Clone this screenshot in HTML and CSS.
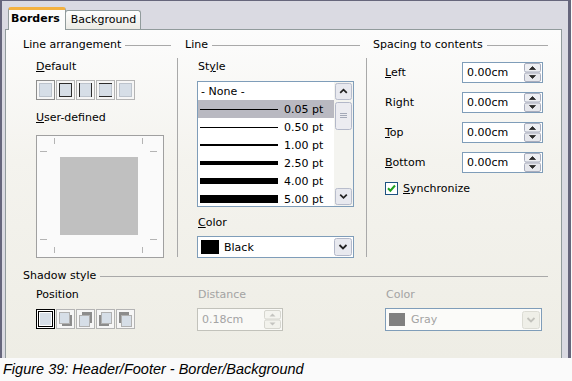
FILE: index.html
```html
<!DOCTYPE html>
<html lang="en">
<head>
  <meta charset="UTF-8">
  <title>Header/Footer - Border/Background</title>
  <link rel="stylesheet" href="styles.css">
</head>
<body>
  <svg class="defs" width="0" height="0">
    <symbol id="spin" viewBox="0 0 17 19">
      <rect x=".5" y=".5" width="16" height="8.5" rx="1.5" fill="#eeeff3" stroke="#a9adbd"/>
      <rect x=".5" y="10" width="16" height="8.5" rx="1.5" fill="#e6e7ec" stroke="#a9adbd"/>
      <path d="M5.5 6.5l3-3 3 3z" fill="#2a2a2a" stroke="#2a2a2a" stroke-width=".8"/>
      <path d="M5.5 12.5l3 3 3-3z" fill="#2a2a2a" stroke="#2a2a2a" stroke-width=".8"/>
    </symbol>
    <symbol id="spin-off" viewBox="0 0 17 19">
      <rect x=".5" y=".5" width="16" height="8.5" rx="1.5" fill="#f4f4ef" stroke="#d6d6cf"/>
      <rect x=".5" y="10" width="16" height="8.5" rx="1.5" fill="#f2f2ec" stroke="#d6d6cf"/>
      <path d="M5.5 6.5l3-3 3 3z" fill="#c4c4c0"/>
      <path d="M5.5 12.5l3 3 3-3z" fill="#c4c4c0"/>
    </symbol>
    <symbol id="btn-down" viewBox="0 0 18 18">
      <rect x=".5" y=".5" width="17" height="17" rx="2" fill="#e8e9ef" stroke="#b3b8c9"/>
      <path d="M5.5 7l3.5 3.5 3.5-3.5" fill="none" stroke="#222" stroke-width="1.8"/>
    </symbol>
    <symbol id="btn-up" viewBox="0 0 18 18">
      <rect x=".5" y=".5" width="17" height="17" rx="2" fill="#e8e9ef" stroke="#b3b8c9"/>
      <path d="M5.5 10.5l3.5-3.5 3.5 3.5" fill="none" stroke="#222" stroke-width="1.8"/>
    </symbol>
    <symbol id="btn-off" viewBox="0 0 18 18">
      <rect x=".5" y=".5" width="17" height="17" rx="2" fill="#efefe8" stroke="#dcdcd4"/>
      <path d="M5.5 7l3.5 3.5 3.5-3.5" fill="none" stroke="#c2c2bc" stroke-width="1.8"/>
    </symbol>
  </svg>

  <div class="window">
    <div class="tabs">
      <div class="tab active">Borders</div>
      <div class="tab">Background</div>
    </div>

    <div class="panel">
      <div class="grid">
        <section>
          <div class="heading"><span>Line arrangement</span><i></i></div>
          <div class="body-left">
            <div class="label first"><u>D</u>efault</div>
            <div class="icons">
              <svg width="19" height="20" viewBox="0 0 19 20"><rect x=".5" y=".5" width="18" height="19" fill="#f6f6f6" stroke="#222" stroke-dasharray="1 1"/><rect x="3.5" y="3.5" width="12" height="13" fill="#d6dee7" stroke="#bcc3cc"/></svg>
              <svg width="19" height="20" viewBox="0 0 19 20"><rect x=".5" y=".5" width="18" height="19" fill="#f6f6f6" stroke="#b4b4b4"/><rect x="3.5" y="3.5" width="12" height="13" fill="#d6dee7" stroke="#2c2c2c"/></svg>
              <svg width="19" height="20" viewBox="0 0 19 20"><rect x=".5" y=".5" width="18" height="19" fill="#f6f6f6" stroke="#b4b4b4"/><rect x="3.5" y="3.5" width="12" height="13" fill="#d6dee7" stroke="#bcc3cc"/><path d="M3.5 3v14M15.5 3v14" stroke="#2c2c2c"/></svg>
              <svg width="19" height="20" viewBox="0 0 19 20"><rect x=".5" y=".5" width="18" height="19" fill="#f6f6f6" stroke="#b4b4b4"/><rect x="3.5" y="3.5" width="12" height="13" fill="#d6dee7" stroke="#bcc3cc"/><path d="M3 3.5h13M3 16.5h13" stroke="#2c2c2c"/></svg>
              <svg width="19" height="20" viewBox="0 0 19 20"><rect x=".5" y=".5" width="18" height="19" fill="#f6f6f6" stroke="#b4b4b4"/><rect x="3.5" y="3.5" width="12" height="13" fill="#d6dee7" stroke="#bcc3cc"/></svg>
            </div>
            <div class="label user"><u>U</u>ser-defined</div>
            <svg class="preview" width="128" height="123" viewBox="0 0 128 123">
              <rect x=".5" y=".5" width="127" height="122" fill="#fafafa" stroke="#a0a0a0"/>
              <rect x="24" y="22" width="78" height="78" fill="#c0c0c0"/>
              <path d="M18.5 3v6M106.5 3v6M18.5 112v6M106.5 112v6M4 16.5h7M114 16.5h7M4 104.5h7M114 104.5h7" stroke="#b4b4b4"/>
            </svg>
          </div>
        </section>

        <div class="vsep"></div>

        <section>
          <div class="heading"><span>Line</span><i></i></div>
          <div class="label first indent">St<u>y</u>le</div>
          <div class="listbox">
            <div class="items">
              <div class="item none">- None -</div>
              <div class="item sel"><b class="sample w1"></b>0.05 pt</div>
              <div class="item"><b class="sample w1"></b>0.50 pt</div>
              <div class="item"><b class="sample w2"></b>1.00 pt</div>
              <div class="item"><b class="sample w4"></b>2.50 pt</div>
              <div class="item"><b class="sample w6"></b>4.00 pt</div>
              <div class="item"><b class="sample w8"></b>5.00 pt</div>
            </div>
            <div class="scrollbar">
              <svg width="17" height="17"><use href="#btn-up"/></svg>
              <svg class="thumb" width="17" height="28" viewBox="0 0 17 28"><rect x=".5" y=".5" width="16" height="27" rx="2" fill="#ececf1" stroke="#b3b8c9"/><path d="M5 11.5h7M5 13.5h7M5 15.5h7" stroke="#a4a9b8"/></svg>
              <svg class="down" width="17" height="17"><use href="#btn-down"/></svg>
            </div>
          </div>
          <div class="label color-label indent"><u>C</u>olor</div>
          <div class="dropdown">
            <span class="swatch"></span>Black
            <svg class="btn" width="18" height="18"><use href="#btn-down"/></svg>
          </div>
        </section>

        <div class="vsep"></div>

        <section>
          <div class="heading"><span>Spacing to contents</span><i></i></div>
          <div class="body-right">
            <div class="row first"><span class="name"><u>L</u>eft</span><div class="spin"><span>0.00cm</span><svg width="17" height="19"><use href="#spin"/></svg></div></div>
            <div class="row"><span class="name">Right</span><div class="spin"><span>0.00cm</span><svg width="17" height="19"><use href="#spin"/></svg></div></div>
            <div class="row"><span class="name"><u>T</u>op</span><div class="spin"><span>0.00cm</span><svg width="17" height="19"><use href="#spin"/></svg></div></div>
            <div class="row"><span class="name"><u>B</u>ottom</span><div class="spin"><span>0.00cm</span><svg width="17" height="19"><use href="#spin"/></svg></div></div>
            <div class="check">
              <svg width="13" height="13" viewBox="0 0 13 13"><rect x=".5" y=".5" width="12" height="12" fill="#fff" stroke="#1d5281"/><path d="M3 6.2l2.4 2.5 4.6-5.2" fill="none" stroke="#21a121" stroke-width="2"/></svg>
              <span><u>S</u>ynchronize</span>
            </div>
          </div>
        </section>
      </div>

      <div class="heading shadow-head"><span>Shadow style</span><i></i></div>
      <div class="grid shadow">
        <section class="c1">
          <div class="label indent">Position</div>
          <div class="icons">
            <svg width="19" height="20" viewBox="0 0 19 20"><rect x=".5" y=".5" width="18" height="19" fill="#fff" stroke="#000"/><rect x="2.5" y="2.5" width="14" height="15" fill="#fff" stroke="#000"/><rect x="4" y="4" width="11" height="12" fill="#d6dee7"/></svg>
            <svg width="19" height="20" viewBox="0 0 19 20"><rect x=".5" y=".5" width="18" height="19" fill="#f6f6f6" stroke="#b4b4b4"/><rect x="6" y="6" width="10" height="11" fill="#8c8c8c"/><rect x="3.5" y="3.5" width="10" height="11" fill="#d6dee7" stroke="#b0b0b0"/></svg>
            <svg width="19" height="20" viewBox="0 0 19 20"><rect x=".5" y=".5" width="18" height="19" fill="#f6f6f6" stroke="#b4b4b4"/><rect x="6" y="3" width="10" height="11" fill="#8c8c8c"/><rect x="3.5" y="6.5" width="10" height="11" fill="#d6dee7" stroke="#b0b0b0"/></svg>
            <svg width="19" height="20" viewBox="0 0 19 20"><rect x=".5" y=".5" width="18" height="19" fill="#f6f6f6" stroke="#b4b4b4"/><rect x="3" y="6" width="10" height="11" fill="#8c8c8c"/><rect x="5.5" y="3.5" width="10" height="11" fill="#d6dee7" stroke="#b0b0b0"/></svg>
            <svg width="19" height="20" viewBox="0 0 19 20"><rect x=".5" y=".5" width="18" height="19" fill="#f6f6f6" stroke="#b4b4b4"/><rect x="3" y="3" width="10" height="11" fill="#8c8c8c"/><rect x="5.5" y="6.5" width="10" height="11" fill="#d6dee7" stroke="#b0b0b0"/></svg>
          </div>
        </section>
        <section class="c3">
          <div class="label indent off">Distance</div>
          <div class="spin off-field"><span>0.18cm</span><svg width="17" height="19"><use href="#spin-off"/></svg></div>
        </section>
        <section class="c5">
          <div class="label indent off">Color</div>
          <div class="dropdown off-drop">
            <span class="swatch gray"></span>Gray
            <svg class="btn" width="18" height="18"><use href="#btn-off"/></svg>
          </div>
        </section>
      </div>
    </div>
  </div>

  <p class="caption">Figure 39: Header/Footer - Border/Background</p>
</body>
</html>
```

FILE: styles.css
```css
* {
  box-sizing: border-box;
}

body {
  margin: 0;
  width: 572px;
  height: 381px;
  overflow: hidden;
  background-color: #fafafa;
  font-family: "DejaVu Sans", sans-serif;
  font-size: 11px;
  color: #000;
}

.defs {
  position: absolute;
  width: 0;
  height: 0;
}

.window {
  width: 571px;
  height: 358px;
  background-color: #dadae2;
  border-top: 1px solid #66667c;
  border-left: 2px solid #66667c;
  border-right: 3px solid #66667c;
  padding: 0 6px 0 3px;
}

/* tabs */
.tabs {
  height: 28px;
  display: flex;
  align-items: flex-end;
  padding-left: 3px;
}

.tab {
  height: 19px;
  line-height: 17px;
  padding: 0 4px 0 5px;
  margin-left: -1px;
  border: 1px solid #919b9c;
  border-bottom: none;
  border-radius: 3px 3px 0 0;
  background: linear-gradient(#fefefe, #ebeae5);
}

.tab.active {
  height: 23px;
  margin-left: 0;
  margin-bottom: -1px;
  position: relative;
  z-index: 1;
  padding: 0 5px 0 2px;
  line-height: 18px;
  font-weight: bold;
  border-top: 3px solid #f3b13f;
  background: #fcfcfc;
}

.panel {
  height: 329px;
  overflow: hidden;
  border: 1px solid #919b9c;
  border-bottom: none;
  background: linear-gradient(#fcfcfc, #f4f3ee 40%, #eeede5);
  padding: 8px 0 0 17px;
}

.grid {
  display: grid;
  grid-template-columns: 148px 14px 175px 13px 175px;
}

.heading {
  display: flex;
  align-items: center;
  gap: 4px;
  height: 14px;
  line-height: 14px;
}

.heading i {
  flex: 1;
  height: 1px;
  background-color: #a9a9a9;
}

.vsep {
  width: 1px;
  height: 199px;
  margin: 20px 0 0 6px;
  background-color: #a9a9a9;
}

.label {
  height: 14px;
  line-height: 14px;
  white-space: nowrap;
}

.label.first {
  margin-top: 8px;
}

.indent {
  padding-left: 13px;
}

.off {
  color: #a3a3a3;
}

/* line arrangement */
.body-left {
  padding-left: 13px;
}

.icons {
  display: flex;
  gap: 1px;
  margin-top: 6px;
}

.icons svg {
  display: block;
}

.label.user {
  margin-top: 11px;
}

.preview {
  display: block;
  margin-top: 10px;
}

/* line style list */
.listbox {
  display: flex;
  width: 157px;
  height: 126px;
  margin: 7px 0 0 12px;
  border: 1px solid #7f9db9;
  background-color: #fff;
}

.items {
  flex: 1;
  overflow: hidden;
}

.item {
  display: flex;
  align-items: center;
  height: 18px;
  padding-left: 2px;
  white-space: nowrap;
}

.item.none {
  padding-left: 3px;
}

.item.sel {
  background-color: #b9b9c1;
}

.sample {
  width: 78px;
  margin-right: 6px;
  background-color: #000;
}

.w1 { height: 1px; }
.w2 { height: 2px; }
.w4 { height: 4px; }
.w6 { height: 6px; }
.w8 { height: 8px; }

.scrollbar {
  width: 19px;
  display: flex;
  flex-direction: column;
  padding: 1px;
  background-color: #f4f4f0;
}

.scrollbar svg {
  display: block;
}

.scrollbar .thumb {
  margin-top: 2px;
}

.scrollbar .down {
  margin-top: auto;
}

.label.color-label {
  margin-top: 9px;
}

/* dropdowns */
.dropdown {
  display: flex;
  align-items: center;
  width: 157px;
  height: 22px;
  margin: 6px 0 0 12px;
  padding: 0 1px 0 3px;
  border: 1px solid #7f9db9;
  background-color: #fff;
}

.swatch {
  width: 18px;
  height: 14px;
  margin-right: 5px;
  background-color: #000;
}

.swatch.gray {
  width: 16px;
  height: 13px;
  margin-right: 6px;
  background-color: #808080;
}

.dropdown .btn {
  margin-left: auto;
}

.off-drop {
  height: 23px;
  color: #a3a3a3;
  background-color: #fbfbf9;
}

/* spacing to contents */
.body-right {
  padding-left: 12px;
}

.row {
  display: flex;
  align-items: center;
  height: 21px;
  margin-top: 9px;
}

.row.first {
  margin-top: 10px;
}

.row .name {
  width: 77px;
}

.spin {
  display: flex;
  align-items: center;
  justify-content: space-between;
  width: 81px;
  height: 21px;
  padding: 0 1px 0 4px;
  border: 1px solid #7f9db9;
  background-color: #fff;
}

.spin svg {
  display: block;
}

.check {
  display: flex;
  align-items: center;
  gap: 5px;
  height: 13px;
  margin-top: 9px;
}

.check svg {
  display: block;
}

/* shadow style */
.shadow-head {
  width: 525px;
  margin-top: 11px;
}

.shadow .label {
  margin-top: 5px;
}

.shadow .icons {
  margin: 7px 0 0 13px;
}

.c1 { grid-column: 1; }
.c3 { grid-column: 3; }
.c5 { grid-column: 5; }

.off-field {
  width: 86px;
  height: 23px;
  margin: 6px 0 0 12px;
  color: #a3a3a3;
  border-color: #c2c2bb;
  background-color: #f9f9f6;
}

/* caption */
.caption {
  margin: 0;
  height: 23px;
  padding-left: 3px;
  line-height: 23px;
  font-family: "Liberation Sans", Arial, sans-serif;
  font-style: italic;
  font-size: 14.5px;
}
```
